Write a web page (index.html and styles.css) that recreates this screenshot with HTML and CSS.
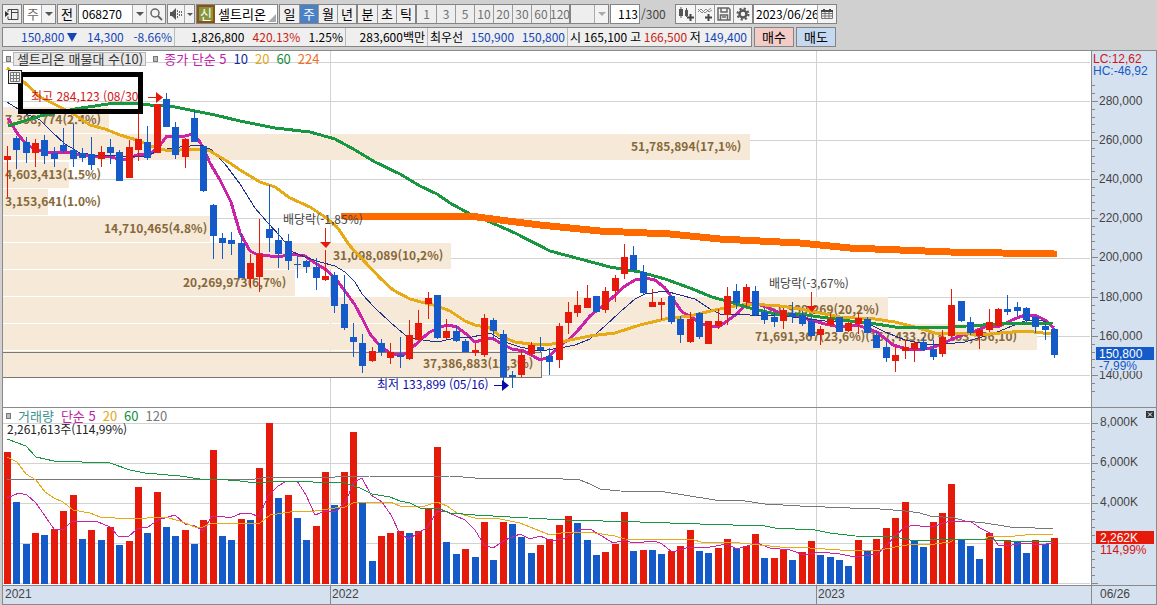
FILE: index.html
```html
<!DOCTYPE html>
<html lang="ko">
<head>
<meta charset="utf-8">
<title>셀트리온 주간 차트</title>
<link rel="stylesheet" href="styles.css">
</head>
<body>
<div class="app">
  <header class="toolbar">
    <button class="box btn first" aria-label="패널 열기"><svg width="14" height="14" viewBox="0 0 14 14"><path d="M3 2.500h10v10H3v-3M3 5V2.500M6 5.500h7M6.500 3v9" fill="none" stroke="#444"/><path d="M0 4l4 3-4 3z" fill="#333"/></svg></button>
    <span class="box combo w32"><select class="muted" aria-label="주기"><option>주</option></select><i class="cell"></i></span>
    <button class="box btn">전</button>
    <span class="box combo code"><input aria-label="종목코드" value="068270"><i class="cell"></i><button class="part" aria-label="종목 검색"><svg width="14" height="14" viewBox="0 0 14 14"><circle cx="6" cy="6" r="4" fill="none" stroke="#666" stroke-width="1.500"/><path d="M9 9l4 4" stroke="#666" stroke-width="2"/></svg></button></span>
    <span class="box combo sound"><button class="part" aria-label="소리"><svg width="14" height="12" viewBox="0 0 14 12"><path d="M1 4h2l4-4v12L3 8H1z" fill="#555"/><path d="M8.500 2v8M10.500 3v6M12.500 3v6" stroke="#666" stroke-dasharray="2 1"/></svg></button><i class="cell small"></i></span>
    <span class="box combo stock"><b class="credit">신</b><input aria-label="종목명" value="셀트리온"><i class="corner"></i></span>
    <span class="box group"><button>일</button><button class="on">주</button><button>월</button><button>년</button></span>
    <span class="box group"><button>분</button><button>초</button><button>틱</button></span>
    <span class="box group off"><button>1</button><button>3</button><button>5</button><button>10</button><button>20</button><button>30</button><button>60</button><button>120</button></span>
    <span class="box combo w39 off"><select disabled aria-label="사용자 주기"><option></option></select><i class="cell pale"></i></span>
    <input class="box count" aria-label="봉 개수" value="113">
    <span class="total">/300</span>
    <span class="box group tools">
      <button aria-label="캔들 추가"><svg width="16" height="16" viewBox="0 0 16 16"><path d="M1 3h4v7H1zM2.500 1h1v11h-1zM7 4h3v6H7zM8 2h1v9H8z" fill="#555"/><path d="M12.500 8v7M9 11.500h7" stroke="#444" stroke-width="2"/></svg></button>
      <button aria-label="지표 추가"><svg width="16" height="16" viewBox="0 0 16 16"><path d="M1 6l3-3 4 4 6-5M1 3l4 4 4-4 3 3 3-2" fill="none" stroke="#888"/><path d="M11.500 8v7M8 11.500h7" stroke="#444" stroke-width="2"/></svg></button>
      <button aria-label="저장"><svg width="14" height="14" viewBox="0 0 14 14"><path d="M1 1h10.500L13 2.500V13H1zM4 1v4h6V1M3.500 13V8h7v5M5 10h4" fill="none" stroke="#666" stroke-width="1.500"/></svg></button>
      <button aria-label="설정"><svg width="14" height="14" viewBox="0 0 14 14"><circle cx="7" cy="7" r="3.500" fill="none" stroke="#555" stroke-width="2.500"/><circle cx="7" cy="7" r="5.500" fill="none" stroke="#555" stroke-width="2" stroke-dasharray="2.160 2.160"/></svg></button>
    </span>
    <span class="box combo date"><input aria-label="날짜" value="2023/06/26"><button class="part" aria-label="달력"><svg width="12" height="10" viewBox="0 0 12 10"><path d="M.5 1.500h11v8H.5zM1 4.500h10M1 7h10M4 3v6M8 3v6" fill="none" stroke="#777"/><path d="M0 1h12v2H0zM2 0h2v2H2zM8 0h2v2H8z" fill="#444"/></svg></button></span>
  </header>

  <div class="quote">
    <div class="box strip">
      <span class="seg price down"><span>150,800<i class="fall"></i></span><span>14,300</span><span>-8.66%</span></span>
      <span class="seg vol"><span>1,826,800</span><span class="up">420.13%</span><span>1.25%</span></span>
      <span class="seg amount">283,600백만</span>
      <span class="seg best"><span>최우선</span><span class="down">150,900</span><span class="down">150,800</span></span>
      <span class="seg range"><span>시</span><span>165,100</span><span>고</span><span class="up">166,500</span><span>저</span><span class="down">149,400</span></span>
    </div>
    <button class="box order buy">매수</button>
    <button class="box order sell">매도</button>
  </div>

  <main class="frame">
    <section class="panel">
      <svg class="plot" id="price" role="img" aria-label="주가 차트"></svg>
      <div class="legend"><i class="dot"></i><span class="chip">셀트리온 매물대 수(10)</span><i class="dot second"></i><span class="m5">종가 단순 5</span><span class="m10">10</span><span class="m20">20</span><span class="m60">60</span><span class="m224">224</span></div>
      <button class="sheet" aria-label="표 보기"><svg width="10" height="10" viewBox="0 0 10 10"><path d="M.5.5h9v9h-9zM1 3.500h8M1 6.500h8M3.500 1v8M6.500 1v8" fill="none" stroke="#777"/></svg></button>
    </section>
    <svg class="axis" id="price-axis"></svg>
    <section class="panel line">
      <svg class="plot" id="volume" role="img" aria-label="거래량 차트"></svg>
      <div class="legend"><i class="dot"></i><span class="name">거래량</span><span class="m5">단순 5</span><span class="m20">20</span><span class="m60">60</span><span class="m120">120</span></div>
      <div class="reading">2,261,613주(114,99%)</div>
    </section>
    <div class="axis line"><svg class="plot" id="volume-axis"></svg><button class="close" aria-label="닫기"><svg width="8" height="7" viewBox="0 0 8 7"><path d="M2 1.500l4 4M6 1.500l-4 4" stroke="#fff"/></svg></button></div>
    <svg class="years" id="years"></svg>
    <div class="today">06/26</div>
  </main>
</div>
<script src="chart.js"></script>
</body>
</html>
```
FILE: styles.css
```css
* { box-sizing: border-box; }
body, button, input, select {
  font-family: "Noto Sans CJK KR", sans-serif;
  font-size: 12px;
  line-height: 16px;
}
body { margin: 0; background: #d0d0d0; color: #000; overflow: hidden; }
button, input, select { margin: 0; padding: 0; border: 0; border-radius: 0; color: inherit; background: none; appearance: none; }
button { display: flex; align-items: center; justify-content: center; }
i { display: block; flex: none; }

.app { display: flex; flex-direction: column; padding: 4px 0 0 2px; }
.toolbar, .quote { display: flex; gap: 1px; height: 20px; white-space: nowrap; }
.quote { margin-top: 3px; gap: 2px; }
.box { display: flex; flex: none; border: 1px solid #848484; background: #f0f0f0; }
.btn { width: 20px; font-size: 13px; }
.combo { background: #fff; }
.combo input, .combo select { flex: 1; min-width: 0; padding-left: 3px; background: #fff; }
.combo .muted { color: #666; font-size: 13px; }
.w32 { width: 33px; }
.w39 { width: 39px; }
.code { width: 88px; }
.sound { width: 28px; }
.stock { width: 82px; position: relative; }
.stock input, .stock .credit { font-size: 13px; }
.date { width: 84px; }
.date input { padding-left: 2px; }
.part { width: 19px; background: #f3f3f3; border-left: 1px solid #aaa; }
.sound .part { border: 0; width: 16px; }
.cell { width: 14px; border-left: 1px solid #aaa; background: #f3f3f3; display: flex; align-items: center; justify-content: center; }
.cell.small { width: 10px; }
.cell::before { content: ""; border: 4px solid transparent; border-top-color: #555; border-bottom: 0; }
.cell.small::before { border-width: 3px 3px 0; }
.cell.pale::before { border-top-color: #aaa; }
.credit { width: 18px; border: 2px solid #8c5214; background: #87963c; color: #fff; font-weight: 400; line-height: 14px; text-align: center; }
.corner { position: absolute; right: 1px; bottom: 1px; border-left: 8px solid transparent; border-bottom: 8px solid #aaa; }
.group { margin-right: -1px; }
.group button { width: 19px; border-left: 1px solid #999; font-size: 13px; }
.group.off button { font-size: 12px; }
.group button:first-child { border-left: 0; }
.group .on { background: #4a80c4; color: #fff; }
.off { color: #707070; background: #eee; }
.off select { background: #eee; }
.count { width: 30px; padding-right: 1px; text-align: right; background: #fff; }
.total { width: 33px; line-height: 19px; color: #444; }
.tools { background: #f5f5f5; }

.strip { width: 750px; background: #efefef; }
.seg { display: flex; align-items: center; justify-content: space-between; border-right: 1px solid #bbb; padding: 0 2px; }
.seg:last-child { border-right: 0; }
.price { width: 172px; padding-left: 18px; }
.price span { display: flex; align-items: center; }
.vol { width: 171px; padding-left: 16px; }
.amount { width: 82px; justify-content: flex-end; }
.best { width: 140px; }
.range { flex: 1; padding-right: 4px; }
.fall { margin-left: 3px; border: 5px solid transparent; border-top: 9px solid #1446b4; border-bottom: 0; }
.down { color: #1446b4; }
.up { color: #c81e14; }
.order { width: 40px; font-size: 13px; }
.buy { background: #f3ccc8; }
.sell { background: #c5daf0; }

.frame {
  display: grid;
  grid-template-columns: minmax(0, 1fr) 65px;
  grid-template-rows: 356px 178px 19px;
  margin-top: 3px;
  border: 1px solid #8a8a8a;
  background: #fff;
}
.panel { position: relative; min-width: 0; }
.line { border-top: 1px solid #8a8a8a; }
.plot { display: block; width: 100%; height: 100%; }
.axis { position: relative; width: 65px; height: 100%; background: #d6e1ef; border-left: 1px solid #8a8a8a; }
.years { width: 100%; height: 100%; background: #d6e1ef; border-top: 1px solid #8a8a8a; }
.today { background: #d6e1ef; border-top: 1px solid #8a8a8a; border-left: 1px solid #8a8a8a; padding-left: 8px; color: #444; font-family: "Liberation Sans", sans-serif; }
.legend { position: absolute; left: 3px; top: 0; height: 16px; display: flex; align-items: center; gap: 7px; white-space: nowrap; font-size: 13px; }
.dot { width: 5px; height: 6px; border: 1px solid #777; background: #bbb; }
.chip { height: 14px; margin-left: -5px; padding: 0 2px 0 3px; line-height: 12px; background: #e8e8e8; border: 1px solid #b5b5b5; color: #333; }
.second { margin-right: -1px; }
.m5 { color: #c020a8; }
.m10 { color: #102a9a; }
.m20 { color: #e0a81c; }
.m60 { color: #128c3c; }
.m224 { color: #f0701e; }
.m120 { color: #777; }
.name { color: #3c8f90; }
.reading { position: absolute; left: 4px; top: 13px; color: #222; }
.sheet { position: absolute; left: 5px; top: 19px; width: 14px; height: 14px; border: 1px solid #222; background: #eee; }
.close { position: absolute; right: 2px; top: 3px; width: 8px; height: 7px; background: #333; }

svg text { font-family: "Noto Sans CJK KR", sans-serif; font-size: 12px; }
.axis text, .years text { font-family: "Liberation Sans", sans-serif; }
rect, line, polyline { shape-rendering: crispEdges; }
polyline { fill: none; stroke-linejoin: round; }
.grid { stroke: #d2d2d2; }
.band { fill: #f6e9d7; }
.range-box { fill: none; stroke: #777; }
svg .band-label { fill: #86683a; font-weight: 700; }
.bull { fill: #e61a0a; }
.bear { fill: #145ac8; }
.l5 { stroke: #cc22a8; }
.l10 { stroke: #1e328c; }
.l20 { stroke: #e6aa14; }
.l60 { stroke: #189640; }
.l120 { stroke: #777; }
.l224 { stroke: #ff6a00; stroke-linecap: round; }
.thick { stroke-width: 3px; }
.heavy { stroke-width: 7px; }
.tick { stroke: #888; }
.stem { stroke: #e61a0a; }
.ink { fill: #444; }
.light { fill: #fff; }
.high { fill: #d21414; }
.low { fill: #0a0aaa; }
.blue { fill: #145ac8; }
.cover { fill: #d6e1ef; }
.marker { fill: none; stroke: #000; stroke-width: 5px; }
```
FILE: chart.js
```js
// Each candle: direction, high, low, body top, body bottom.
const candles = `R 146 197 156 160|B 136 169 138 150|B 137 163 142 153|R 139 167 143 153|B 135 164 140 156|B 147 167 153 159|B 128 153 145 151|B 124 167 150 159|B 148 162 153 158|B 137 170 154 165|R 146 167 152 159|B 139 164 147 153|B 150 181 152 181|R 140 178 147 178|R 113 161 139 150|B 126 160 142 158|R 104 153 104 153|B 93 127 99 127|B 122 159 127 155|R 138 168 139 157|B 111 142 118 142|B 145 192 146 191|B 204 259 205 236|B 233 259 238 243|B 232 255 240 244|B 233 278 243 278|R 254 287 263 279|R 219 292 254 277|B 185 252 229 238|B 228 268 240 254|B 234 270 241 261|B 256 278 264 265|B 260 273 261 267|B 258 290 267 278|R 250 281 276 280|B 272 313 275 306|B 275 330 304 328|B 323 357 337 342|B 334 373 343 366|R 347 362 351 361|B 339 356 343 352|R 343 364 352 358|B 337 368 355 357|R 320 360 335 359|R 310 341 323 340|R 292 319 298 304|B 295 339 295 338|R 319 339 331 338|B 325 342 331 341|B 339 352 341 352|R 343 356 350 353|R 314 357 318 355|B 318 339 320 331|B 330 382 334 377|B 371 388 375 377|R 350 377 355 375|R 342 357 345 354|B 337 352 347 350|B 348 375 356 362|R 323 368 326 360|R 302 334 312 323|R 291 317 305 313|R 285 308 298 308|B 296 312 296 312|R 287 313 291 310|R 275 302 278 291|R 244 279 257 274|B 246 271 255 270|B 265 294 272 293|R 289 307 302 307|R 298 320 302 305|B 295 324 296 322|B 316 343 319 335|R 312 343 319 342|B 312 339 313 337|R 321 344 321 344|R 309 329 321 326|R 287 325 296 315|B 284 309 291 303|R 284 307 287 302|B 286 316 291 315|B 308 324 312 320|B 313 327 317 322|R 308 329 310 321|B 302 323 313 317|B 311 326 315 324|B 317 337 321 336|R 326 345 329 335|R 314 327 319 325|B 317 332 317 332|R 322 332 323 331|R 313 334 318 324|B 317 333 319 333|B 332 348 335 348|B 340 362 347 358|R 347 372 355 361|R 340 359 347 351|R 342 362 343 349|B 337 351 342 350|B 340 360 349 357|R 330 357 337 354|R 289 338 305 336|B 301 322 301 321|B 317 335 322 333|R 328 349 330 336|R 309 332 322 330|R 308 327 309 326|B 295 315 309 312|B 302 317 307 311|B 307 322 308 320|B 316 333 317 327|B 324 340 326 330|B 328 358 329 355`
  .split('|').map(r => r.split(' '));

const volumes = `R452 B502 B544 R533 B535 R529 R511 R495 B539 R530 B540 R527 B545 R541 R487 B533 R492 B527 B536 R530 B544 R520 R450 B536 B540 R519 B520 R468 R423 B498 R495 B518 B540 R526 R472 B505 R472 R432 B503 B561 R536 R533 R531 B533 R531 R509 R447 B542 B554 R549 B557 R522 B560 R522 B524 B537 B553 R545 R539 R525 R516 B523 B540 B555 R552 R544 R512 B551 R550 B550 B554 R551 R546 R530 B551 B553 R548 R539 B548 R546 R534 B558 R558 R549 B560 R552 R541 B555 B557 B560 B566 R540 B551 R539 R528 R518 R502 B540 B547 R522 R513 R484 B539 B546 B559 R533 B548 R540 B541 B553 R540 B544 R538`.split(' ');

const priceLines = [
  ['l5 thick', '8,118 17,133 26,144 36,150 46,152 70,152 80,155 95,156 110,157 125,160 137,155 150,154 158,148 167,136 175,137 185,136 193,134 200,142 210,163 220,180 231,202 240,233 250,251 256,254 270,256 280,257 290,254 305,256 315,263 325,269 335,278 345,291 355,305 362,318 370,334 380,346 390,353 397,355 405,354 415,345 425,336 430,332 440,327 448,325 457,327 465,333 475,342 482,340 492,338 502,344 512,349 524,351 533,356 540,360 549,357 560,345 570,339 580,328 590,316 600,308 612,298 625,286 635,280 645,278 655,280 665,288 675,302 682,312 690,316 700,323 712,327 720,326 730,319 738,313 746,304 754,303 766,307 780,313 793,315 811,320 825,324 840,327 852,325 860,326 877,332 893,345 907,349 920,350 930,348 940,345 950,340 960,336 975,331 985,327 1000,326 1012,320 1025,315 1035,315 1045,320 1054,328'],
  ['l10', '7,102 26,114 40,120 52,132 65,144 80,153 95,155 120,156 145,157 160,150 180,147 200,145 212,150 225,164 240,184 255,208 268,223 280,236 293,252 305,257 320,262 335,266 345,272 355,282 362,294 375,308 390,322 405,335 415,339 430,341 442,341 455,338 472,337 490,333 505,342 520,347 540,351 560,348 575,345 590,339 605,326 620,312 635,299 645,294 665,291 680,295 695,299 710,309 720,314 750,315 780,315 800,318 825,321 850,322 865,322 885,332 905,340 925,344 945,344 965,342 985,336 1000,331 1012,326 1025,321 1040,320 1052,324'],
  ['l20 thick', '7,68 25,83 40,97 60,107 75,115 90,125 105,129 120,135 140,141 150,146 165,150 180,150 195,149 210,151 230,163 240,170 260,182 275,187 290,198 310,207 325,217 337,227 350,246 365,262 380,278 393,290 410,299 425,303 437,306 450,311 465,321 475,325 490,328 500,336 515,342 530,344 552,344 570,340 590,336 615,333 640,325 665,319 690,316 715,310 735,306 750,304 780,306 800,309 820,313 840,317 855,318 875,319 895,322 915,327 935,333 960,333 980,335 1000,333 1025,331 1052,334'],
  ['l60 thick', '8,126 40,116 75,109 108,104 125,103 150,105 165,105 190,110 215,115 240,121 275,128 310,132 335,139 355,150 375,162 400,174 420,186 437,194 450,203 470,214 490,222 515,233 550,251 580,259 610,267 640,272 665,279 690,288 712,297 730,302 750,308 775,314 800,314 820,317 850,321 870,323 895,327 950,327 1000,324 1053,323'],
  ['l224 heavy', '344,216 470,216 500,220 540,225 600,231 670,234 720,239 800,243 850,248 900,250 950,252 1054,254']
];

const volumeLines = [
  ['l120', '7,479 255,479 270,477 325,478 335,477 370,476 400,477 450,476 475,478 545,478 580,480 590,484 600,489 620,491 665,492 690,496 715,500 745,501 765,504 800,506 850,508 880,509 905,511 920,513 930,516 955,518 965,521 985,523 1010,527 1035,528 1053,529'],
  ['l5', '7,498 19,493 27,495 36,503 45,516 54,529 63,530 72,521 98,522 110,527 118,536 128,537 137,529 148,527 158,520 175,515 185,524 195,526 203,531 212,516 220,516 230,518 242,513 250,513 259,517 268,496 278,486 285,482 297,481 306,495 315,515 325,511 335,512 345,503 354,482 362,478 371,495 382,502 391,515 400,534 409,539 418,533 427,528 437,511 447,512 465,520 475,530 484,545 493,548 505,540 520,534 530,539 540,536 552,541 565,538 580,529 592,530 605,538 613,543 625,540 633,543 655,541 662,544 672,552 690,547 710,547 727,544 737,549 757,543 770,548 790,550 804,555 820,552 840,554 855,557 877,554 886,546 895,536 905,527 915,525 925,527 935,526 950,521 970,521 980,528 990,533 998,545 1012,545 1025,543 1040,545 1053,543'],
  ['l20', '7,457 17,462 26,474 36,480 45,492 54,498 63,502 73,510 90,513 100,517 130,519 165,517 180,521 195,527 203,527 212,523 260,523 270,515 290,512 315,511 335,508 345,507 355,502 390,502 400,506 425,506 437,502 447,506 457,513 475,518 500,519 520,523 540,531 550,535 567,532 595,533 615,536 625,539 660,540 690,539 705,543 730,542 760,545 780,547 810,548 840,550 880,550 895,547 907,545 935,544 950,542 955,539 985,539 988,537 1015,536 1025,535 1053,534'],
  ['l60', '7,439 26,446 36,457 54,461 110,463 130,470 145,473 180,476 200,479 215,479 240,481 255,483 280,481 345,483 360,488 372,494 390,497 400,501 410,503 420,508 440,509 450,513 475,515 510,517 565,520 640,522 700,524 765,526 775,528 815,530 830,533 855,536 895,537 915,541 945,539 985,539 1005,541 1053,541']
];

// Volume-by-price bands: top, right edge, label, label position.
const bands = [
  [107, 109, '7,398,774(2.4%)', 5], [134, 750, '51,785,894(17,1%)', 631],
  [162, 69, '4,603,413(1.5%)', 5], [189, 48, '3,153,641(1.0%)', 5],
  [216, 210, '14,710,465(4.8%)', 104], [243, 451, '31,098,089(10,2%)', 333],
  [270, 295, '20,269,973(6,7%)', 183], [297, 888, '61,339,269(20,2%)', 769],
  [324, 1037, '71,691,367(23,6%)(167,433,20 ~ 153,556,10)', 755],
  [351, 541, '37,386,883(12,3%)', 423]
];

const LEFT = 3, SPAN = 1088, PRICE_TOP = 51, VOLUME_TOP = 408;

function draw() {
  const price = document.getElementById('price');
  const k = price.clientWidth / SPAN;
  const X = v => Math.round((v - LEFT) * k);
  const at = i => X(7.1 + i * 9.348);
  const rect = (c, x, y, w, h) => `<rect class="${c}" x="${x}" y="${y}" width="${w}" height="${h}"/>`;
  const line = (c, a, b, d, e) => `<line class="${c}" x1="${a}" y1="${b}" x2="${d}" y2="${e}"/>`;
  const text = (c, x, y, s) => `<text class="${c}" x="${x}" y="${y}">${s}</text>`;
  const poly = ([c, p], top) => `<polyline class="${c}" points="${p.split(' ').map(q => {
    const [x, y] = q.split(',');
    return X(+x) + ',' + (y - top);
  }).join(' ')}"/>`;
  const kind = d => d === 'R' ? 'bull' : 'bear';
  const years = [[330, '2022'], [816, '2023']];

  let s = '';
  for (let i = 0; i < 9; i++) s += line('grid', 0, Math.round(11 + i * 39.1) + .5, X(1090), Math.round(11 + i * 39.1) + .5);
  years.forEach(([x]) => s += line('grid', X(x) + .5, 0, X(x) + .5, 357));
  bands.forEach(([y, r]) => s += rect('band', 0, y - PRICE_TOP, X(r), 26));
  s += rect('range-box', -1, 301.5, X(541) + 1, 25);
  bands.forEach(([y, , label, x]) => s += text('band-label', X(x), y - PRICE_TOP + 17, label));
  priceLines.forEach(l => s += poly(l, PRICE_TOP));
  s += text('ink', X(283), 173, '배당락(-1,85%)') + text('ink', X(769), 237, '배당락(-3,67%)');
  candles.forEach(([d, hi, lo, t, b], i) => {
    s += rect(kind(d), at(i), hi - PRICE_TOP, 1, lo - hi) + rect(kind(d), at(i) - 3, t - PRICE_TOP, 7, b - t);
  });
  const drop = (x, y) => line('stem', X(x) + .5, y, X(x) + .5, y + 14) + `<path class="bull" d="M${X(x) - 5} ${y + 14}h11l-5 6z"/>`;
  s += drop(325, 177) + drop(811, 241);
  const arrow = (c, x, y) => `<path class="${c}" d="M${X(x)} ${y}h8v-5l7 5.500-7 5.500v-5h-8z"/>`;
  s += text('high', X(31), 50, '최고 284,123 (08/30') + arrow('bull', 148, 46);
  s += text('low', X(377), 338, '최저 133,899 (05/16)') + arrow('low', 494, 334);
  s += `<rect class="marker" x="${X(20) + .5}" y="23.500" width="120" height="37"/>`;
  price.innerHTML = s;

  s = '';
  for (let i = 0; i < 5; i++) s += line('grid', 0, 15.5 + i * 40, X(1090), 15.5 + i * 40);
  years.forEach(([x]) => s += line('grid', X(x) + .5, 0, X(x) + .5, 177));
  volumes.forEach((v, i) => {
    const y = v.slice(1) - VOLUME_TOP;
    s += rect(kind(v[0]), at(i) - 3, y, 7, 176 - y);
  });
  volumeLines.forEach(l => s += poly(l, VOLUME_TOP));
  document.getElementById('volume').innerHTML = s;

  s = text('high', 1, 12, 'LC:12,62') + text('blue', 1, 24, 'HC:-46,92');
  for (let i = 0; i < 8; i++) {
    const y = Math.round(50 + i * 39.1);
    s += line('tick', 0, y + .5, 6, y + .5) + text('ink', 7, y + 4, (280 - i * 20) + ',000');
    for (let j = -2; j < 3; j++) s += line('tick', 0, y + j * 8 + .5, 3, y + j * 8 + .5);
  }
  s += rect('blue', 4, 296, 58, 13) + text('light', 7, 307, '150,800');
  s += rect('cover', 6, 309, 50, 11) + text('blue', 7, 319, '-7,99%');
  document.getElementById('price-axis').innerHTML = s;

  s = '';
  for (let i = 0; i < 5; i++) {
    const y = 15 + i * 40;
    s += line('tick', 0, y + .5, 6, y + .5);
    for (let j = 1; j < 5 && i < 4; j++) s += line('tick', 0, y + j * 8 + .5, 3, y + j * 8 + .5);
    if (i < 3) s += text('ink', 8, y + 3, (8 - i * 2) + ',000K');
  }
  s += rect('bull', 4, 123, 58, 13) + text('light', 8, 134, '2,262K') + text('high', 8, 146, '114,99%');
  document.getElementById('volume-axis').innerHTML = s;

  s = text('ink', 2, 12, '2021');
  years.forEach(([x, y]) => s += line('tick', X(x) + .5, 0, X(x) + .5, 18) + text('ink', X(x) + 2, 12, y));
  document.getElementById('years').innerHTML = s;
}

draw();
window.addEventListener('resize', draw);
```
